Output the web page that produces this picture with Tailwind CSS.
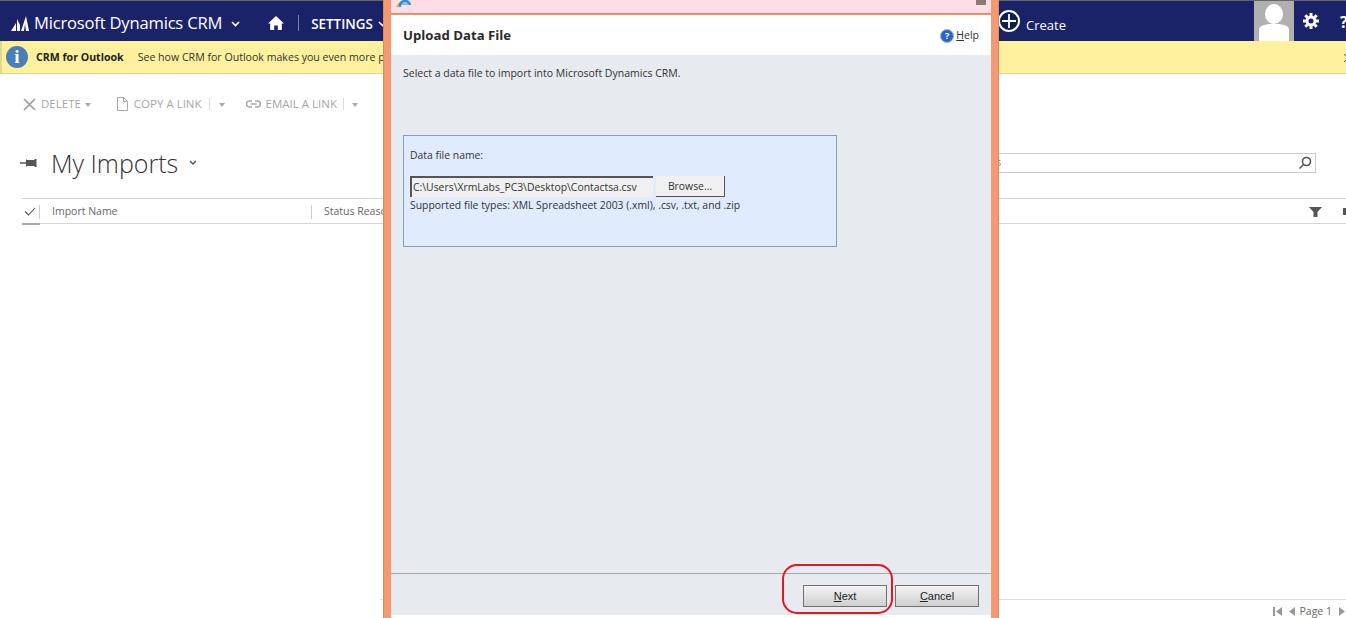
<!DOCTYPE html>
<html lang="en">
<head>
<meta charset="UTF-8">
<title>Upload Data File</title>
<script src="https://cdn.jsdelivr.net/npm/@tailwindcss/browser@4"></script>
</head>
<body class="relative h-[618px] w-[1346px] overflow-hidden bg-white font-['Open_Sans',sans-serif] text-[#444]">
  <!-- crm page behind the dialog -->
  <div class="border-t border-[#666]"></div>
  <nav class="flex h-[40px] items-center bg-[#1b2368] pt-[4px] text-white">
    <svg class="ml-[11px] h-[15px] w-[18px]" viewBox="0 0 18 15" fill="#fff"><path d="M0 15 5 7v8zM6 15V3l3 6v6zM10 15 15 0l3 15h-3l-1-7-1 7z"/></svg>
    <span class="ml-[5px] text-[16.600px] leading-none tracking-[-0.2px]">Microsoft Dynamics CRM</span>
    <svg class="ml-[9px] mt-[2px] h-[8px] w-[9px]" viewBox="0 0 9 8" fill="none" stroke="#fff" stroke-width="1.600"><path d="M1 2l3.500 3.500L8 2"/></svg>
    <svg class="ml-[28px] h-[16px] w-[16px]" viewBox="0 0 16 16" fill="#fff"><path d="M8 1 0 8.500h2.200V15h4v-4.500h3.600V15h4V8.500H16z"/></svg>
    <div class="ml-[14px] h-[16px] w-px bg-[#7a80a8]"></div>
    <span class="ml-[12px] mt-[4px] text-[13.400px] font-semibold leading-none">SETTINGS</span>
    <svg class="ml-[5px] mt-[2px] h-[8px] w-[9px]" viewBox="0 0 9 8" fill="none" stroke="#fff" stroke-width="1.600"><path d="M1 2l3.500 3.500L8 2"/></svg>
  </nav>
  <div class="flex h-[33px] items-center border-b border-l-2 border-[#e0d98a] bg-[#fef09c] pl-[4px] text-[10.600px] text-[#333]">
    <div class="flex h-[22px] w-[22px] items-center justify-center rounded-full bg-[#4a7eb6] font-['Liberation_Serif',serif] text-[19px] font-bold text-white">i</div>
    <span class="ml-[8px] mt-[2px] font-bold text-[#222]">CRM for Outlook</span>
    <span class="ml-[14px] mt-[2px]">See how CRM for Outlook makes you even more productive</span>
  </div>
  <div class="mt-[20px] flex h-[20px] items-center pl-[23px] text-[11.500px] text-[#a6a6a6]">
    <svg class="h-[13px] w-[13px]" viewBox="0 0 13 13" stroke="#999" stroke-width="1.600"><path d="M1 1l11 11M12 1 1 12"/></svg>
    <span class="ml-[5px]">DELETE</span>
    <span class="ml-[4px] mt-[1px] border-x-[3.500px] border-t-[4px] border-x-transparent border-t-[#aaa]"></span>
    <svg class="ml-[26px] h-[14px] w-[11px]" viewBox="0 0 11 14" fill="none" stroke="#aaa"><path d="M.5.5h6l4 4v9H.5zM6.500.5v4h4"/></svg>
    <span class="ml-[6px]">COPY A LINK</span>
    <span class="ml-[7px] h-[12px] w-px bg-[#ddd]"></span>
    <span class="ml-[9px] mt-[1px] border-x-[3.500px] border-t-[4px] border-x-transparent border-t-[#aaa]"></span>
    <svg class="ml-[21px] h-[8px] w-[15px]" viewBox="0 0 15 8" fill="none" stroke="#aaa" stroke-width="1.600"><path d="M6 1H3.500a3 3 0 0 0 0 6H6M9 1h2.500a3 3 0 0 1 0 6H9M4.500 4h6"/></svg>
    <span class="ml-[5px]">EMAIL A LINK</span>
    <span class="ml-[6px] h-[12px] w-px bg-[#ddd]"></span>
    <span class="ml-[8px] mt-[1px] border-x-[3.500px] border-t-[4px] border-x-transparent border-t-[#aaa]"></span>
  </div>
  <div class="mt-[29px] flex h-[40px] items-center pl-[20px] pr-[30px]">
    <svg class="h-[10px] w-[17px]" viewBox="0 0 17 10" fill="#555"><path d="M0 4.300h6V1l1 1h7l1-1h1.500v8H15l-1-1H7L6 9V5.700H0z"/></svg>
    <span class="ml-[14px] text-[25px] font-light leading-none text-[#333]">My Imports</span>
    <svg class="ml-[11px] h-[6px] w-[8px]" viewBox="0 0 8 6" fill="none" stroke="#555" stroke-width="1.500"><path d="M1 1l3 3 3-3"/></svg>
    <div class="ml-auto flex h-[20px] w-[350px] items-center justify-end border border-[#ccc] pr-[3px]">
      <svg class="h-[14px] w-[14px]" viewBox="0 0 14 14" fill="none" stroke="#555" stroke-width="1.600"><circle cx="8.500" cy="5.500" r="4"/><path d="M5.500 8.500 1.500 12.500"/></svg>
    </div>
  </div>
  <span class="absolute left-[996px] top-[154px] text-[11px] text-[#888]">s</span>
  <div class="ml-[22px] mt-[15px] flex h-[26px] items-center border-y border-[#d6d6d6] pt-px text-[10.500px] text-[#666]">
    <svg class="ml-[2px] h-[9px] w-[12px]" viewBox="0 0 12 9" fill="none" stroke="#555" stroke-width="1.100"><path d="M1 4.500 4.500 8 11 1"/></svg>
    <span class="ml-[3px] h-[14px] w-px bg-[#ccc]"></span>
    <span class="ml-[12px] w-[259px]">Import Name</span>
    <span class="h-[14px] w-px bg-[#ccc]"></span>
    <span class="ml-[12px]">Status Reason</span>
    <svg class="ml-auto mr-[21px] h-[10px] w-[13px]" viewBox="0 0 13 10" fill="#555"><path d="M0 0h13L8.500 5v5h-4V5z"/></svg>
    <span class="h-[7px] w-[3px] bg-[#555]"></span>
  </div>
  <div class="absolute left-[22px] top-[223px] h-[2px] w-[18px] bg-[#aaa]"></div>
  <div class="absolute left-[380px] top-[599px] flex h-[19px] w-[966px] items-center justify-end border-t border-[#ddd] pt-[5px] text-[10.500px] text-[#666]">
    <svg class="mr-[7px] h-[9px] w-[9px]" viewBox="0 0 9 9" fill="#999"><path d="M0 0h2v9H0zM9 0v9L3 4.500z"/></svg>
    <svg class="mr-[5px] h-[9px] w-[6px]" viewBox="0 0 6 9" fill="#999"><path d="M6 0v9L0 4.500z"/></svg>
    <span>Page 1</span>
    <svg class="ml-[7px] mr-[1px] h-[9px] w-[6px]" viewBox="0 0 6 9" fill="#999"><path d="M0 0v9l6-4.500z"/></svg>
  </div>

  <!-- create button and user area, sit on the nav -->
  <div class="absolute left-[998px] top-[10px] flex h-[22px] w-[22px] items-center justify-center rounded-full border-2 border-white bg-[#0d1f4f]">
    <svg class="h-[14px] w-[14px]" viewBox="0 0 14 14" stroke="#fff" stroke-width="1.800"><path d="M7 0v14M0 7h14"/></svg>
  </div>
  <span class="absolute left-[1026px] top-[16px] text-[13px] text-white">Create</span>
  <div class="absolute left-[1254px] top-[1px] h-[40px] w-[40px] overflow-hidden bg-[#b0b0b0]">
    <svg class="h-[40px] w-[40px]" viewBox="0 0 40 40" fill="#fff"><ellipse cx="20" cy="13" rx="9" ry="10"/><path d="M5 40V29c0-3 2-4 5-5l5-1h10l5 1c3 1 5 2 5 5v11z"/></svg>
  </div>
  <svg class="absolute left-[1303px] top-[13px] h-[16px] w-[16px]" viewBox="0 0 16 16" fill="none" stroke="#fff"><circle cx="8" cy="8" r="4" stroke-width="3"/><path stroke-width="3" d="M8 0v3M8 13v3M0 8h3M13 8h3M2.300 2.300l2 2M11.700 11.700l2 2M2.300 13.700l2-2M11.700 4.300l2-2"/></svg>
  <span class="absolute left-[1340px] top-[10px] text-[16px] font-bold text-white">?</span>
  <svg class="absolute left-[1344px] top-[54px] h-[8px] w-[2px]" viewBox="0 0 2 8" stroke="#555"><path d="M0 0l2 2M0 8l2-2"/></svg>

  <!-- modal window -->
  <div class="absolute left-[383px] top-0 flex h-[618px] w-[616px] flex-col border-x border-[#d98a64] bg-[#f39a72] px-[7px]">
    <div class="relative flex h-[14px] items-start border-b border-[#d98a64] bg-[#fddde6]">
      <svg class="ml-[5px] h-[8px] w-[16px]" viewBox="0 0 16 8" fill="none"><path d="M1 7C2 3 6 1 9 2" stroke="#e8b020" stroke-width="1.500"/><path d="M4 7a5 5 0 0 1 10-2" stroke="#2a8fd8" stroke-width="2.500"/><path d="M4 4h10" stroke="#2a8fd8" stroke-width="1"/></svg>
      <div class="absolute left-[585px] top-0 h-[5px] w-[10px] bg-[#8a7a70]"></div>
    </div>
    <div class="mt-px flex min-h-0 flex-1 flex-col">
      <div class="flex h-[40px] items-center justify-between bg-white pl-[12px] pr-[12px] pt-px">
        <h1 class="text-[13.200px] font-bold text-[#2b2b2b]">Upload Data File</h1>
        <div class="flex items-center text-[10.500px] text-[#333]">
          <span class="flex h-[14px] w-[14px] items-center justify-center rounded-full border border-[#8fb6ea] bg-[#2a64c4] text-[9px] font-bold text-white">?</span>
          <span class="ml-[2px]"><span class="underline">H</span>elp</span>
        </div>
      </div>
      <div class="flex flex-1 flex-col bg-[#e7eaef]">
        <p class="ml-[12px] mt-[10px] text-[10.500px] leading-[16px] text-[#333]">Select a data file to import into Microsoft Dynamics CRM.</p>
        <div class="ml-[12px] mt-[54px] h-[112px] w-[434px] border border-[#7f9fc0] bg-[#e0ecfd] pl-[6px] text-[10.400px] text-[#333]">
          <p class="mt-[11px] leading-[16px]">Data file name:</p>
          <div class="mt-[13px] flex h-[21px]">
            <div class="flex w-[243px] items-center border-l-2 border-t-2 border-[#555] bg-[#f0f0f0] pl-[1px] leading-none">C:\Users\XrmLabs_PC3\Desktop\Contactsa.csv</div>
            <button class="ml-[3px] flex w-[69px] items-center justify-center border-r border-b border-[#555] bg-[#f0f0f0] pt-[2px]">Browse...</button>
          </div>
          <p class="mt-[1px] leading-[14px]">Supported file types: XML Spreadsheet 2003 (.xml), .csv, .txt, and .zip</p>
        </div>
        <div class="mt-auto flex h-[42px] justify-end gap-[8px] border-t border-[#a8a8a8] pr-[12px] pt-[11px] font-['Liberation_Sans',sans-serif] text-[11px] text-[#222]">
          <button class="h-[22px] w-[84px] border border-[#707070] bg-gradient-to-b from-[#f4f4f4] to-[#cfcfcf]"><span class="underline">N</span>ext</button>
          <button class="h-[22px] w-[84px] border border-[#707070] bg-gradient-to-b from-[#f4f4f4] to-[#cfcfcf]"><span class="underline">C</span>ancel</button>
        </div>
      </div>
      <div class="h-[3px] bg-white"></div>
    </div>
  </div>
  <!-- red annotation round the next button -->
  <div class="absolute left-[782px] top-[564px] h-[50px] w-[111px] rounded-[15px] border-[2.500px] border-[#e8141e]"></div>
</body>
</html>
